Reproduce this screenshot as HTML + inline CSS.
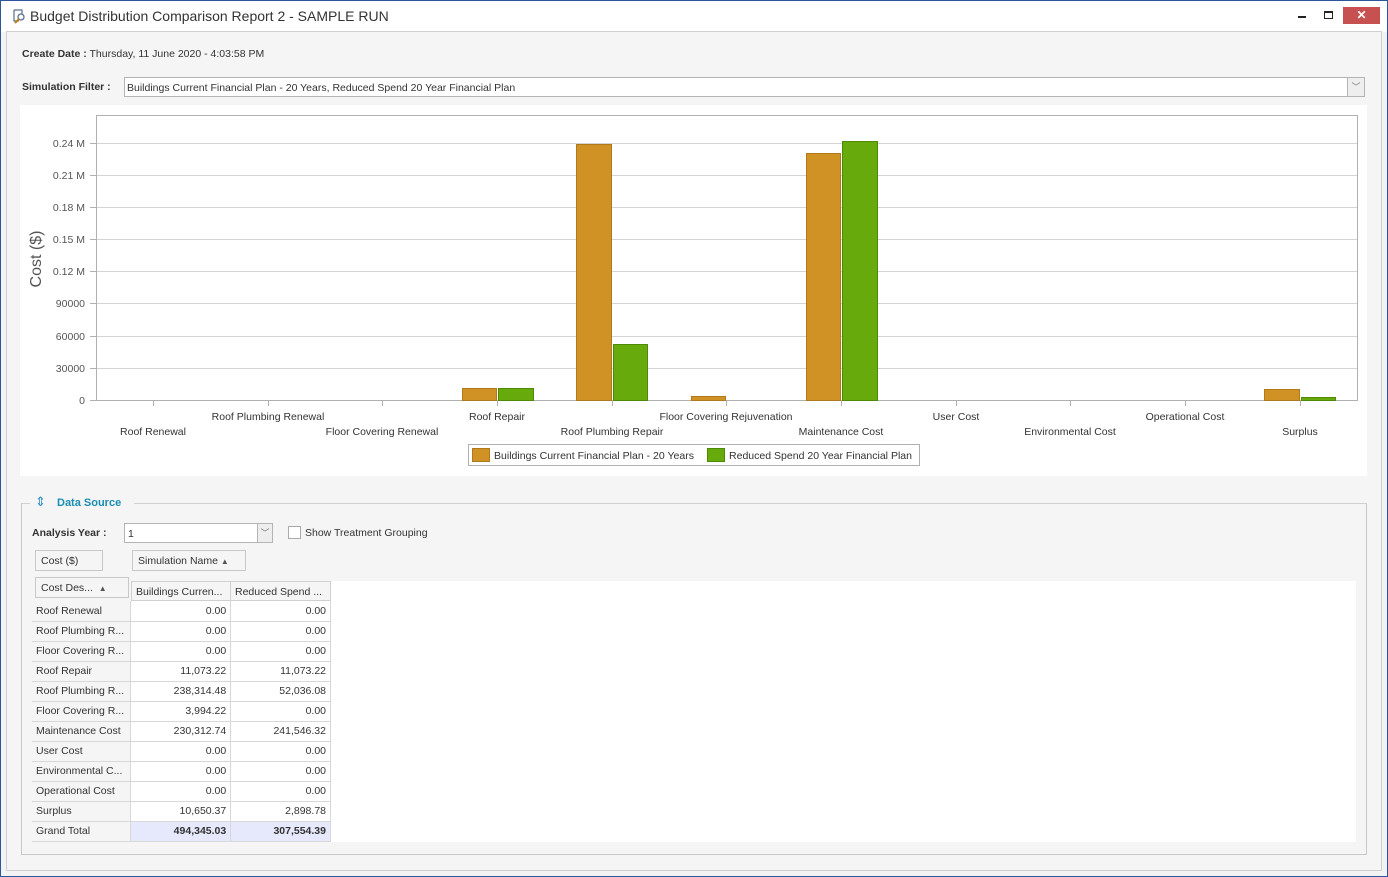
<!DOCTYPE html>
<html><head><meta charset="utf-8"><style>
*{margin:0;padding:0;box-sizing:border-box}
body{width:1388px;height:877px;position:relative;background:#f3f3f3;font-family:Tahoma,"Liberation Sans",sans-serif;font-size:10.5px;color:#333;overflow:hidden}
.a{position:absolute}
.frame{left:0;top:0;width:1388px;height:877px;border:1px solid #2b579a}
.title{left:1px;top:1px;width:1386px;height:31px;background:#fff}
.tbl div{position:absolute;height:20px;line-height:20px;padding:0 4px;white-space:nowrap;overflow:hidden}
</style></head><body>
<div class="a frame"></div>
<div class="a title"></div>
<svg class="a" style="left:11px;top:8px" width="16" height="16" viewBox="0 0 16 16"><path d="M3 2h8v4M3 2v11h5" fill="none" stroke="#5b6f8c" stroke-width="1.2"/><circle cx="10" cy="9" r="3" fill="none" stroke="#5b6f8c" stroke-width="1.3"/><path d="M8 11l-4 4" stroke="#c08020" stroke-width="2"/></svg>
<div class="a" style="left:30px;top:8px;font-size:14px;color:#333">Budget Distribution Comparison Report 2 - SAMPLE RUN</div>
<div class="a" style="left:1298px;top:16px;width:8px;height:2px;background:#222"></div>
<div class="a" style="left:1324px;top:11px;width:9px;height:8px;border:1px solid #222;border-top-width:2px"></div>
<div class="a" style="left:1343px;top:7px;width:37px;height:17px;background:#c75050;color:#fff;text-align:center;font-size:12px;line-height:17px;font-weight:bold">✕</div>
<div class="a" style="left:6px;top:31px;width:1376px;height:840px;border:1px solid #d0d0d0;background:#f5f5f5"></div>
<div class="a" style="left:22px;top:48px"><b>Create Date :</b> Thursday, 11 June 2020 - 4:03:58 PM</div>
<div class="a" style="left:22px;top:81px"><b>Simulation Filter :</b></div>
<div class="a" style="left:124px;top:77px;width:1241px;height:20px;border:1px solid #b4b4b4;background:#fff;padding:3px 2px;line-height:14px">Buildings Current Financial Plan - 20 Years, Reduced Spend 20 Year Financial Plan</div>
<div class="a" style="left:1347px;top:78px;width:17px;height:18px;border-left:1px solid #b4b4b4;background:#eee;text-align:center;color:#777;line-height:18px;font-size:9px">﹀</div>
<div class="a" style="left:20px;top:105px;width:1347px;height:371px;background:#fff"></div>
<svg class="a" style="left:0;top:0" width="1388" height="480">
<g stroke="#d4d4d4" stroke-width="1">
<line x1="96" x2="1357" y1="143.5" y2="143.5"/><line x1="96" x2="1357" y1="175.5" y2="175.5"/><line x1="96" x2="1357" y1="207.5" y2="207.5"/><line x1="96" x2="1357" y1="239.5" y2="239.5"/><line x1="96" x2="1357" y1="271.5" y2="271.5"/><line x1="96" x2="1357" y1="303.5" y2="303.5"/><line x1="96" x2="1357" y1="336.5" y2="336.5"/><line x1="96" x2="1357" y1="368.5" y2="368.5"/>
</g>
<rect x="96.5" y="115.5" width="1261" height="285" fill="none" stroke="#b0b0b0"/>
<g fill="#555" font-size="10.5" text-anchor="end" font-family="Tahoma,'Liberation Sans',sans-serif">
<text x="85" y="147">0.24 M</text><text x="85" y="179">0.21 M</text><text x="85" y="211">0.18 M</text><text x="85" y="243">0.15 M</text><text x="85" y="275">0.12 M</text><text x="85" y="307">90000</text><text x="85" y="340">60000</text><text x="85" y="372">30000</text><text x="85" y="404">0</text>
</g>
<text transform="translate(41,259) rotate(-90)" text-anchor="middle" font-size="16" fill="#555" font-family="Tahoma,'Liberation Sans',sans-serif">Cost ($)</text>
<g stroke="#b0b0b0">
<line x1="90" x2="96" y1="143.5" y2="143.5"/><line x1="90" x2="96" y1="175.5" y2="175.5"/><line x1="90" x2="96" y1="207.5" y2="207.5"/><line x1="90" x2="96" y1="239.5" y2="239.5"/><line x1="90" x2="96" y1="271.5" y2="271.5"/><line x1="90" x2="96" y1="303.5" y2="303.5"/><line x1="90" x2="96" y1="336.5" y2="336.5"/><line x1="90" x2="96" y1="368.5" y2="368.5"/><line x1="90" x2="96" y1="400.5" y2="400.5"/>
<line x1="153.5" x2="153.5" y1="400" y2="406"/><line x1="268.5" x2="268.5" y1="400" y2="406"/><line x1="382.5" x2="382.5" y1="400" y2="406"/><line x1="497.5" x2="497.5" y1="400" y2="406"/><line x1="612.5" x2="612.5" y1="400" y2="406"/><line x1="726.5" x2="726.5" y1="400" y2="406"/><line x1="841.5" x2="841.5" y1="400" y2="406"/><line x1="956.5" x2="956.5" y1="400" y2="406"/><line x1="1070.5" x2="1070.5" y1="400" y2="406"/><line x1="1185.5" x2="1185.5" y1="400" y2="406"/><line x1="1300.5" x2="1300.5" y1="400" y2="406"/>
</g>
<g stroke-width="1">
<rect x="462.5" y="388.5" width="34" height="12" fill="#d09225" stroke="#b07a1c"/>
<rect x="498.5" y="388.5" width="35" height="12" fill="#66aa0c" stroke="#4e8a06"/>
<rect x="576.5" y="144.5" width="35" height="256" fill="#d09225" stroke="#b07a1c"/>
<rect x="613.5" y="344.5" width="34" height="56" fill="#66aa0c" stroke="#4e8a06"/>
<rect x="691.5" y="396.5" width="34" height="4" fill="#d09225" stroke="#b07a1c"/>
<rect x="806.5" y="153.5" width="34" height="247" fill="#d09225" stroke="#b07a1c"/>
<rect x="842.5" y="141.5" width="35" height="259" fill="#66aa0c" stroke="#4e8a06"/>
<rect x="1264.5" y="389.5" width="35" height="11" fill="#d09225" stroke="#b07a1c"/>
<rect x="1301.5" y="397.5" width="34" height="3" fill="#66aa0c" stroke="#4e8a06"/>
</g>
<g fill="#333" font-size="10.5" text-anchor="middle" font-family="Tahoma,'Liberation Sans',sans-serif">
<text x="153" y="435">Roof Renewal</text><text x="268" y="420">Roof Plumbing Renewal</text><text x="382" y="435">Floor Covering Renewal</text><text x="497" y="420">Roof Repair</text><text x="612" y="435">Roof Plumbing Repair</text><text x="726" y="420">Floor Covering Rejuvenation</text><text x="841" y="435">Maintenance Cost</text><text x="956" y="420">User Cost</text><text x="1070" y="435">Environmental Cost</text><text x="1185" y="420">Operational Cost</text><text x="1300" y="435">Surplus</text>
</g>
<rect x="468.5" y="444.5" width="451" height="21" fill="#fff" stroke="#b0b0b0"/>
<rect x="472.5" y="448.5" width="17" height="13" fill="#d09225" stroke="#b07a1c"/>
<rect x="707.5" y="448.5" width="17" height="13" fill="#66aa0c" stroke="#4e8a06"/>
<g fill="#333" font-size="10.5" font-family="Tahoma,'Liberation Sans',sans-serif"><text x="494" y="459" textLength="200" lengthAdjust="spacingAndGlyphs">Buildings Current Financial Plan - 20 Years</text><text x="729" y="459" textLength="183" lengthAdjust="spacingAndGlyphs">Reduced Spend 20 Year Financial Plan</text></g>
<text x="694" y="486" text-anchor="middle" fill="#777" font-size="10">·····</text>
</svg>
<div class="a" style="left:21px;top:503px;width:1346px;height:352px;border:1px solid #c8c8c8;border-top-color:#d0d0d0"></div>
<div class="a" style="left:30px;top:494px;width:104px;height:18px;background:#f5f5f5"></div>
<div class="a" style="left:35px;top:494px;color:#2a8fc8;font-size:13px">⇕</div>
<div class="a" style="left:57px;top:497px;color:#1a8db3;font-weight:bold;font-size:11px">Data Source</div>
<div class="a" style="left:32px;top:527px"><b>Analysis Year :</b></div>
<div class="a" style="left:124px;top:523px;width:149px;height:20px;border:1px solid #b4b4b4;background:#fff;padding:3px 3px;line-height:14px">1</div>
<div class="a" style="left:257px;top:524px;width:15px;height:18px;border-left:1px solid #b4b4b4;background:#eee;text-align:center;color:#777;line-height:18px;font-size:9px">﹀</div>
<div class="a" style="left:288px;top:526px;width:13px;height:13px;border:1px solid #aaa;background:#fff"></div>
<div class="a" style="left:305px;top:527px">Show Treatment Grouping</div>
<div class="a" style="left:35px;top:550px;width:68px;height:21px;border:1px solid #c8c8c8;padding:4px 5px;background:#f5f5f5">Cost ($)</div>
<div class="a" style="left:132px;top:550px;width:114px;height:21px;border:1px solid #c8c8c8;padding:4px 5px;background:#f5f5f5">Simulation Name <span style="font-size:8px;color:#555">▲</span></div>
<div class="a" style="left:35px;top:577px;width:94px;height:21px;border:1px solid #c8c8c8;padding:4px 5px;background:#f5f5f5">Cost Des... &nbsp;<span style="font-size:8px;color:#555">▲</span></div>
<div class="a" style="left:331px;top:581px;width:1025px;height:261px;background:#fff"></div>
<div class="a tbl" style="left:0;top:0">
<div style="left:131px;top:581px;width:100px;background:#f5f5f5;border:1px solid #d0d0d0">Buildings Curren...</div>
<div style="left:231px;top:581px;width:100px;background:#f5f5f5;border:1px solid #d0d0d0;border-left:0">Reduced Spend ...</div>
</div>
<div class="a" style="left:32px;top:601px;width:299px">
<table style="border-collapse:collapse;font-size:10.5px;font-family:Tahoma,'Liberation Sans',sans-serif;color:#333">
<colgroup><col style="width:99px"><col style="width:100px"><col style="width:100px"></colgroup>
<tbody>
<tr><td>Roof Renewal</td><td>0.00</td><td>0.00</td></tr>
<tr><td>Roof Plumbing R...</td><td>0.00</td><td>0.00</td></tr>
<tr><td>Floor Covering R...</td><td>0.00</td><td>0.00</td></tr>
<tr><td>Roof Repair</td><td>11,073.22</td><td>11,073.22</td></tr>
<tr><td>Roof Plumbing R...</td><td>238,314.48</td><td>52,036.08</td></tr>
<tr><td>Floor Covering R...</td><td>3,994.22</td><td>0.00</td></tr>
<tr><td>Maintenance Cost</td><td>230,312.74</td><td>241,546.32</td></tr>
<tr><td>User Cost</td><td>0.00</td><td>0.00</td></tr>
<tr><td>Environmental C...</td><td>0.00</td><td>0.00</td></tr>
<tr><td>Operational Cost</td><td>0.00</td><td>0.00</td></tr>
<tr><td>Surplus</td><td>10,650.37</td><td>2,898.78</td></tr>
<tr class="gt"><td>Grand Total</td><td>494,345.03</td><td>307,554.39</td></tr>
</tbody></table></div>
<style>
td{height:20px;border:1px solid #d8d8d8;padding:0 4px;text-align:right;background:#fff;white-space:nowrap;line-height:18px}
td:first-child{text-align:left;background:#f5f5f5;border-left:0}
tr:first-child td{border-top:0}
.gt td{background:#e6e9fb;font-weight:bold}
.gt td:first-child{background:#f5f5f5;font-weight:normal}
</style>
</body></html>
